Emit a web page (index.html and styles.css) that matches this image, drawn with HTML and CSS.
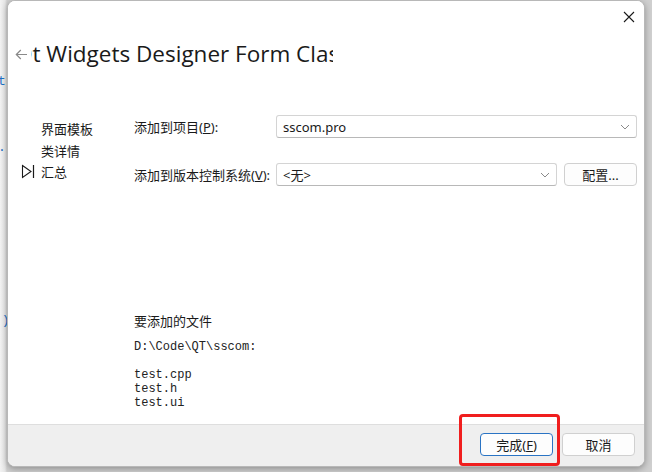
FILE: index.html
```html
<!DOCTYPE html>
<html lang="zh-CN">
<head>
    <meta charset="UTF-8">
    <title>Qt Widgets Designer Form Class</title>
    <link rel="stylesheet" href="styles.css">
</head>
<body>
    <!-- editor peeking out behind the dialog -->
    <div class="editor-behind">
        <span class="code-frag frag-1">tr</span>
        <span class="code-frag frag-2">.</span>
        <span class="code-frag frag-3">:)</span>
    </div>

    <div class="wizard">
        <button class="close-btn" aria-label="关闭">
            <svg width="12" height="12" viewBox="0 0 12 12"><path d="M1 1L11 11M11 1L1 11" stroke="#1a1a1a" stroke-width="1.1"/></svg>
        </button>

        <div class="wizard-main">
            <div class="wizard-header">
                <span class="back-arrow">
                    <svg width="13" height="11" viewBox="0 0 13 11"><path d="M12 5.5H1.5M5.8 1L1.3 5.5L5.8 10" fill="none" stroke="#8a8a8a" stroke-width="1.2"/></svg>
                </span>
                <div class="title-clip">
                    <h1 class="wizard-title">Qt Widgets Designer Form Class</h1>
                </div>
            </div>

            <div class="wizard-body">
                <ul class="steps">
                    <li class="step"><span class="step-icon"></span>界面模板</li>
                    <li class="step"><span class="step-icon"></span>类详情</li>
                    <li class="step current">
                        <span class="step-icon">
                            <svg width="14" height="15" viewBox="0 0 14 15"><path d="M1.5 1.5L10 7.5L1.5 13.5Z" fill="none" stroke="#1a1a1a" stroke-width="1.1"/><path d="M12.5 1V14" stroke="#1a1a1a" stroke-width="1.2"/></svg>
                        </span>汇总
                    </li>
                </ul>

                <div class="summary">
                    <div class="form-row">
                        <label class="form-label">添加到项目(<u>P</u>):</label>
                        <div class="combo wide">
                            <span>sscom.pro</span>
                            <svg class="chevron" width="10" height="6" viewBox="0 0 10 6"><path d="M1 1L5 5L9 1" fill="none" stroke="#8a8a8a" stroke-width="1"/></svg>
                        </div>
                    </div>
                    <div class="form-row">
                        <label class="form-label">添加到版本控制系统(<u>V</u>):</label>
                        <div class="combo narrow">
                            <span>&lt;无&gt;</span>
                            <svg class="chevron" width="10" height="6" viewBox="0 0 10 6"><path d="M1 1L5 5L9 1" fill="none" stroke="#8a8a8a" stroke-width="1"/></svg>
                        </div>
                        <button class="btn config-btn">配置...</button>
                    </div>

                    <div class="files">
                        <p class="files-title">要添加的文件</p>
                        <pre class="file-list">D:\Code\QT\sscom:

test.cpp
test.h
test.ui</pre>
                    </div>
                </div>
            </div>
        </div>

        <div class="wizard-footer">
            <button class="btn default-btn">完成(<u>F</u>)</button>
            <button class="btn">取消</button>
        </div>
    </div>

    <!-- red marker drawn over the finish button -->
    <div class="highlight-box"></div>
</body>
</html>
```

FILE: styles.css
```css
body {
    margin: 0;
    width: 652px;
    height: 472px;
    overflow: hidden;
    background: #f4f4f4;
    font-family: "Noto Sans", "Noto Sans CJK SC", sans-serif;
    font-size: 13px;
    color: #1a1a1a;
    position: relative;
}

/* editor text showing at the left edge */
.editor-behind {
    position: absolute;
    inset: 0;
    background: linear-gradient(to right, #f3f3f3 0, #e6e6e6 5px, #cfcfcf 7px);
}

.code-frag {
    position: absolute;
    left: -2px;
    color: #1f6fc5;
    font-family: "Liberation Mono", monospace;
    font-size: 13px;
}

.frag-1 { top: 74px; }
.frag-2 { top: 140px; }
.frag-3 { top: 313px; left: -6px; }

/* the dialog window */
.wizard {
    position: absolute;
    left: 7px;
    top: 0;
    width: 636px;
    height: 465px;
    border: 1px solid #b8b8b8;
    border-radius: 8px;
    background: #fff;
    box-shadow: 0 2px 6px rgba(0, 0, 0, 0.3);
    display: flex;
    flex-direction: column;
    overflow: hidden;
}

.close-btn {
    position: absolute;
    top: 9px;
    right: 8px;
    width: 14px;
    height: 14px;
    padding: 0;
    border: none;
    background: none;
    display: flex;
    align-items: center;
    justify-content: center;
}

.wizard-main {
    flex: 1 1 0;
    min-height: 0;
    display: flex;
    flex-direction: column;
    background: #fff;
}

.wizard-header {
    display: flex;
    align-items: center;
    height: 28px;
    margin-top: 39px;
    padding-left: 7px;
}

.back-arrow {
    display: flex;
    width: 15px;
}

.title-clip {
    width: 302px;
    overflow: hidden;
    margin-left: 1px;
}

.wizard-title {
    margin: 0 0 0 -16px;
    font-family: "Open Sans", "Noto Sans", sans-serif;
    font-size: 22.5px;
    font-weight: normal;
    white-space: nowrap;
    line-height: 28px;
}

.wizard-body {
    display: flex;
    margin-top: 47px;
    flex: 1;
}

/* step list on the left */
.steps {
    list-style: none;
    margin: 0;
    padding: 3px 0 0 13px;
    width: 114px;
}

.step {
    display: flex;
    align-items: center;
    height: 21.5px;
}

.step-icon {
    width: 20px;
    display: flex;
}

/* summary page */
.summary {
    flex: 1;
    display: flex;
    flex-direction: column;
    padding-right: 7px;
}

.form-row {
    display: flex;
    align-items: center;
    height: 23px;
    margin-bottom: 25px;
}

.form-label {
    width: 142px;
}

.combo {
    height: 21px;
    border: 1px solid #d4d4d4;
    border-bottom-color: #b8b8b8;
    border-radius: 3px;
    background: #fff;
    display: flex;
    align-items: center;
    justify-content: space-between;
    padding: 0 6px;
    box-sizing: content-box;
}

.combo.wide { width: 347px; }
.combo.narrow { width: 267px; }

.btn {
    height: 23px;
    width: 73px;
    border: 1px solid #d0d0d0;
    border-radius: 4px;
    background: #fdfdfd;
    font-family: "Noto Sans", "Noto Sans CJK SC", sans-serif;
    font-size: 13px;
    color: #1a1a1a;
    padding: 0;
    line-height: 20px;
}

.config-btn {
    margin-left: 7px;
}

.files {
    margin-top: 101px;
}

.files-title {
    margin: 0;
    line-height: 18px;
}

.file-list {
    margin: 10px 0 0;
    font-family: "Liberation Mono", monospace;
    font-size: 12px;
    line-height: 14px;
    color: #222;
}

/* bottom button bar */
.wizard-footer {
    flex: 0 0 42px;
    background: #efefef;
    border-top: 1px solid #dedede;
    display: flex;
    justify-content: flex-end;
    align-items: flex-start;
    gap: 9px;
    padding: 8px 9px 0 0;
    box-sizing: border-box;
}

.default-btn {
    border-color: #2a74c4;
}

.highlight-box {
    position: absolute;
    left: 459px;
    top: 414px;
    width: 95px;
    height: 46px;
    border: 3px solid #f01e1e;
    border-radius: 4px;
}
```
